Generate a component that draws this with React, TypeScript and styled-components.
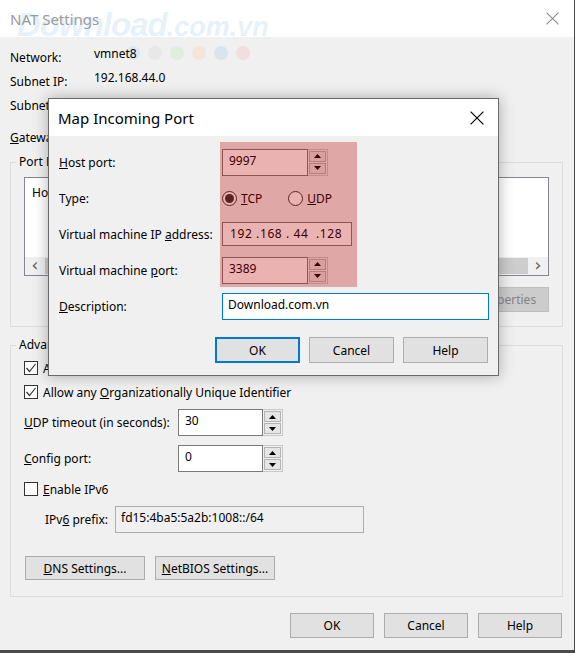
import styled, { createGlobalStyle } from "styled-components";

const GlobalStyles = createGlobalStyle`
  html, body {
    margin: 0;
    padding: 0;
  }
  body {
    background: #4a4a4a;
    font-family: "Segoe UI", "Noto Sans", sans-serif;
    font-size: 12px;
    color: #000;
  }
  * {
    box-sizing: border-box;
  }
`;

function CloseIcon({ size, color }: { size: number; color: string }): JSX.Element {
  return (
    <svg width={size} height={size} viewBox="0 0 12 12">
      <path d="M0.5 0.5 L11.5 11.5 M11.5 0.5 L0.5 11.5" stroke={color} strokeWidth="1" />
    </svg>
  );
}

function CheckMark(): JSX.Element {
  return (
    <svg width="12" height="12" viewBox="0 0 12 12">
      <path d="M1.5 6 L4.5 9.5 L10.5 2" stroke="#333" strokeWidth="1.2" fill="none" />
    </svg>
  );
}

function Spinner({ value, $width }: { value: string; $width: number }): JSX.Element {
  return (
    <SpinWrap>
      <SpinInput $width={$width}>{value}</SpinInput>
      <SpinButtons>
        <SpinButton>
          <svg width="7" height="4" viewBox="0 0 7 4">
            <path d="M0 4 L3.5 0 L7 4 Z" fill="#000" />
          </svg>
        </SpinButton>
        <SpinButton>
          <svg width="7" height="4" viewBox="0 0 7 4">
            <path d="M0 0 L3.5 4 L7 0 Z" fill="#000" />
          </svg>
        </SpinButton>
      </SpinButtons>
    </SpinWrap>
  );
}

const dotColors = ["#c9e4f5", "#e2e2e2", "#d6ebcf", "#f6dfc6", "#c8dbeb", "#f3cfd3"];

function App(): JSX.Element {
  return (
    <Window>
      <GlobalStyles />
      <TitleBar>
        <span>NAT Settings</span>
        <CloseIcon size={13} color="#8a8a8a" />
      </TitleBar>

      {/* site watermark, sits under the dialog text */}
      <Watermark>
        <WatermarkBig>Download</WatermarkBig>
        <WatermarkSmall>.com.vn</WatermarkSmall>
      </Watermark>
      <DotRow>
        {dotColors.map((c) => (
          <Dot key={c} $color={c} />
        ))}
      </DotRow>

      <Content>
        <InfoGrid>
          <InfoLabel>Network:</InfoLabel>
          <span>vmnet8</span>
          <InfoLabel>Subnet IP:</InfoLabel>
          <span>192.168.44.0</span>
          <InfoLabel>Subnet mask:</InfoLabel>
          <span />
          <InfoLabel $tall>
            <u>G</u>ateway IP:
          </InfoLabel>
          <span />
        </InfoGrid>

        <Group $mt={5} $pt={7} $pb={14}>
          <Legend>Port Forwarding</Legend>
          <ListBox>
            <ListHeader>
              <HeaderCell $width={90}>Host Port</HeaderCell>
              <HeaderCell $width={60}>Type</HeaderCell>
              <HeaderCell $width={170}>Virtual Machine IP Address</HeaderCell>
              <HeaderCell $width={150}>Description</HeaderCell>
            </ListHeader>
            <HScroll>
              <ScrollArrow>&#x2039;</ScrollArrow>
              <ScrollTrack>
                <ScrollThumb />
              </ScrollTrack>
              <ScrollArrow>&#x203A;</ScrollArrow>
            </HScroll>
          </ListBox>
          <ButtonRow $mt={11}>
            <Button $width={84} $disabled>
              Properties
            </Button>
          </ButtonRow>
        </Group>

        <Group $mt={10} $pt={3} $pb={16}>
          <Legend>Advanced</Legend>
          <CheckRow>
            <CheckBox>
              <CheckMark />
            </CheckBox>
            <span>
              Allow active <u>F</u>TP
            </span>
          </CheckRow>
          <CheckRow>
            <CheckBox>
              <CheckMark />
            </CheckBox>
            <span>
              Allow any <u>O</u>rganizationally Unique Identifier
            </span>
          </CheckRow>
          <FieldRow $mt={5}>
            <FieldLabel $width={154}>
              <u>U</u>DP timeout (in seconds):
            </FieldLabel>
            <Spinner value="30" $width={85} />
          </FieldRow>
          <FieldRow $mt={9}>
            <FieldLabel $width={154}>
              <u>C</u>onfig port:
            </FieldLabel>
            <Spinner value="0" $width={85} />
          </FieldRow>
          <CheckRow $mt={5}>
            <CheckBox />
            <span>
              <u>E</u>nable IPv6
            </span>
          </CheckRow>
          <FieldRow $mt={5} $indent={21}>
            <FieldLabel $width={70}>
              IPv<u>6</u> prefix:
            </FieldLabel>
            <TextBox $width={249} $height={27} $disabled>
              fd15:4ba5:5a2b:1008::/64
            </TextBox>
          </FieldRow>
          <ButtonRow $mt={23} $start>
            <Button $width={120} $height={24}>
              <u>D</u>NS Settings...
            </Button>
            <Button $width={120} $height={24}>
              <u>N</u>etBIOS Settings...
            </Button>
          </ButtonRow>
        </Group>

        <ButtonRow $mt={16} $gap={10} $pr={1}>
          <Button $width={84}>OK</Button>
          <Button $width={84}>Cancel</Button>
          <Button $width={84}>Help</Button>
        </ButtonRow>
      </Content>

      <Dialog>
        <DialogTitle>
          <span>Map Incoming Port</span>
          <CloseIcon size={14} color="#000" />
        </DialogTitle>
        <DialogBody>
          <FormGrid>
            <span>
              <u>H</u>ost port:
            </span>
            <Spinner value="9997" $width={86} />
            <span>Type:</span>
            <RadioGroup>
              <RadioItem>
                <Radio $checked />
                <span>
                  <u>T</u>CP
                </span>
              </RadioItem>
              <RadioItem>
                <Radio />
                <span>
                  <u>U</u>DP
                </span>
              </RadioItem>
            </RadioGroup>
            <span>
              Virtual machine IP <u>a</u>ddress:
            </span>
            <IpBox>192 .168 . 44  .128</IpBox>
            <span>
              Virtual machine <u>p</u>ort:
            </span>
            <Spinner value="3389" $width={86} />
            <span>
              <u>D</u>escription:
            </span>
            <TextBox $width={267} $height={27} $focused>
              Download.com.vn
            </TextBox>
          </FormGrid>
          <ButtonRow $mt={13} $gap={9}>
            <Button $width={85} $height={26} $default>
              OK
            </Button>
            <Button $width={85} $height={26}>
              Cancel
            </Button>
            <Button $width={85} $height={26}>
              Help
            </Button>
          </ButtonRow>
        </DialogBody>
        <Highlight />
      </Dialog>
    </Window>
  );
}

export default App;

const Window = styled.div`
  position: relative;
  width: 574px;
  height: 650px;
  background: #f0f0f0;
  overflow: hidden;
`;

const TitleBar = styled.div`
  height: 37px;
  background: #fff;
  display: flex;
  align-items: center;
  justify-content: space-between;
  padding: 0 15px 0 10px;
  font-size: 15px;
  color: #999;
`;

const Content = styled.div`
  position: relative;
  padding: 8px 11px 0 10px;
`;

const InfoGrid = styled.div`
  display: grid;
  grid-template-columns: 84px 1fr;
`;

const InfoLabel = styled.span<{ $tall?: boolean }>`
  height: ${(p) => (p.$tall ? 32 : 24)}px;
  display: flex;
  align-items: center;
  padding-top: ${(p) => (p.$tall ? 8 : 0)}px;
  white-space: nowrap;
`;

const Group = styled.fieldset<{ $mt: number; $pt: number; $pb: number }>`
  margin: ${(p) => p.$mt}px 0 0;
  padding: ${(p) => p.$pt}px 13px ${(p) => p.$pb}px 13px;
  border: 1px solid #dcdcdc;
  min-width: 0;
`;

const Legend = styled.legend`
  padding: 0 3px;
  margin-left: -8px;
  line-height: 16px;
`;

const ListBox = styled.div`
  height: 99px;
  background: #fff;
  border: 1px solid #828790;
  display: flex;
  flex-direction: column;
  justify-content: space-between;
`;

const ListHeader = styled.div`
  display: flex;
  height: 24px;
  align-items: center;
  margin-top: 2px;
`;

const HeaderCell = styled.span<{ $width: number }>`
  width: ${(p) => p.$width}px;
  padding-left: 7px;
  white-space: nowrap;
`;

const HScroll = styled.div`
  height: 18px;
  display: flex;
  background: #f0f0f0;
`;

const ScrollArrow = styled.div`
  width: 20px;
  display: flex;
  align-items: center;
  justify-content: center;
  font-family: "DejaVu Sans", sans-serif;
  font-size: 17px;
  line-height: 1;
  color: #606060;
  padding-bottom: 2px;
`;

const ScrollTrack = styled.div`
  flex: 1;
  padding: 1px 0;
  display: flex;
`;

const ScrollThumb = styled.div`
  flex: 1;
  background: #cdcdcd;
`;

const ButtonRow = styled.div<{ $mt: number; $gap?: number; $start?: boolean; $pr?: number }>`
  display: flex;
  justify-content: ${(p) => (p.$start ? "flex-start" : "flex-end")};
  gap: ${(p) => p.$gap ?? 10}px;
  margin-top: ${(p) => p.$mt}px;
  padding-left: ${(p) => (p.$start ? 1 : 0)}px;
  padding-right: ${(p) => p.$pr ?? 0}px;
`;

const Button = styled.div<{
  $width: number;
  $height?: number;
  $disabled?: boolean;
  $default?: boolean;
}>`
  width: ${(p) => p.$width}px;
  height: ${(p) => p.$height ?? 25}px;
  display: flex;
  align-items: center;
  justify-content: center;
  background: ${(p) => (p.$disabled ? "#cccccc" : "#e1e1e1")};
  border: ${(p) =>
    p.$default ? "2px solid #0078d7" : p.$disabled ? "1px solid #bfbfbf" : "1px solid #adadad"};
  color: ${(p) => (p.$disabled ? "#838383" : "#000")};
  white-space: nowrap;
`;

const CheckRow = styled.div<{ $mt?: number }>`
  display: flex;
  align-items: center;
  gap: 5px;
  height: 24px;
  margin-top: ${(p) => p.$mt ?? 0}px;
`;

const CheckBox = styled.div`
  width: 14px;
  height: 14px;
  border: 1px solid #333;
  background: #fff;
  display: flex;
  align-items: center;
  justify-content: center;
`;

const FieldRow = styled.div<{ $mt: number; $indent?: number }>`
  display: flex;
  align-items: center;
  margin-top: ${(p) => p.$mt}px;
  padding-left: ${(p) => p.$indent ?? 0}px;
`;

const FieldLabel = styled.span<{ $width: number }>`
  width: ${(p) => p.$width}px;
  white-space: nowrap;
`;

const SpinWrap = styled.div`
  display: flex;
  height: 27px;
`;

const SpinInput = styled.div<{ $width: number }>`
  width: ${(p) => p.$width}px;
  background: #fff;
  border: 1px solid #7a7a7a;
  padding: 3px 6px;
  line-height: 16px;
`;

const SpinButtons = styled.div`
  width: 20px;
  display: flex;
  flex-direction: column;
  gap: 1px;
  padding: 1px;
  background: #f0f0f0;
  border: 1px solid #c8c8c8;
  border-left: none;
`;

const SpinButton = styled.div`
  flex: 1;
  background: #e5e5e5;
  border: 1px solid #b4b4b4;
  display: flex;
  align-items: center;
  justify-content: center;
`;

const TextBox = styled.div<{
  $width: number;
  $height: number;
  $disabled?: boolean;
  $focused?: boolean;
}>`
  width: ${(p) => p.$width}px;
  height: ${(p) => p.$height}px;
  padding: 3px 5px;
  line-height: 16px;
  background: ${(p) => (p.$disabled ? "#f0f0f0" : "#fff")};
  border: 1px solid ${(p) => (p.$focused ? "#0078d7" : p.$disabled ? "#adadad" : "#7a7a7a")};
  white-space: nowrap;
`;

const Watermark = styled.div`
  position: absolute;
  left: 17px;
  top: 6px;
  font-family: "Liberation Sans", sans-serif;
  font-weight: bold;
  font-style: italic;
  color: rgba(130, 185, 230, 0.2);
  white-space: nowrap;
  pointer-events: none;
`;

const WatermarkBig = styled.span`
  font-size: 33px;
  letter-spacing: -1px;
`;

const WatermarkSmall = styled.span`
  font-size: 27px;
`;

const DotRow = styled.div`
  position: absolute;
  left: 126px;
  top: 46px;
  display: flex;
  gap: 8px;
  pointer-events: none;
`;

const Dot = styled.span<{ $color: string }>`
  width: 14px;
  height: 14px;
  border-radius: 50%;
  background: ${(p) => p.$color};
  opacity: 0.55;
`;

const Dialog = styled.div`
  position: absolute;
  left: 48px;
  top: 98px;
  width: 451px;
  height: 278px;
  background: #f0f0f0;
  border: 1px solid #6a6a6a;
  box-shadow: 0 0 14px rgba(0, 0, 0, 0.3);
`;

const DialogTitle = styled.div`
  height: 37px;
  background: #fff;
  display: flex;
  align-items: center;
  justify-content: space-between;
  padding: 0 14px 0 9px;
  font-size: 15px;
`;

const DialogBody = styled.div`
  padding: 8px 10px 0 10px;
`;

const FormGrid = styled.div`
  display: grid;
  grid-template-columns: 163px 1fr;
  grid-auto-rows: 36px;
  align-items: center;
`;

const RadioGroup = styled.div`
  display: flex;
  gap: 26px;
`;

const RadioItem = styled.div`
  display: flex;
  align-items: center;
  gap: 4px;
`;

const Radio = styled.span<{ $checked?: boolean }>`
  width: 15px;
  height: 15px;
  border-radius: 50%;
  border: 1px solid #333;
  background: #fff;
  display: flex;
  align-items: center;
  justify-content: center;

  &::after {
    content: "";
    width: 9px;
    height: 9px;
    border-radius: 50%;
    background: ${(p) => (p.$checked ? "#333" : "transparent")};
  }
`;

const IpBox = styled.div`
  width: 130px;
  height: 24px;
  background: #fff;
  border: 1px solid #7a7a7a;
  padding: 3px 7px;
  line-height: 16px;
  white-space: pre;
  letter-spacing: 0.6px;
`;

const Highlight = styled.div`
  position: absolute;
  left: 171px;
  top: 43px;
  width: 137px;
  height: 145px;
  background: rgba(190, 0, 0, 0.3);
  pointer-events: none;
`;
